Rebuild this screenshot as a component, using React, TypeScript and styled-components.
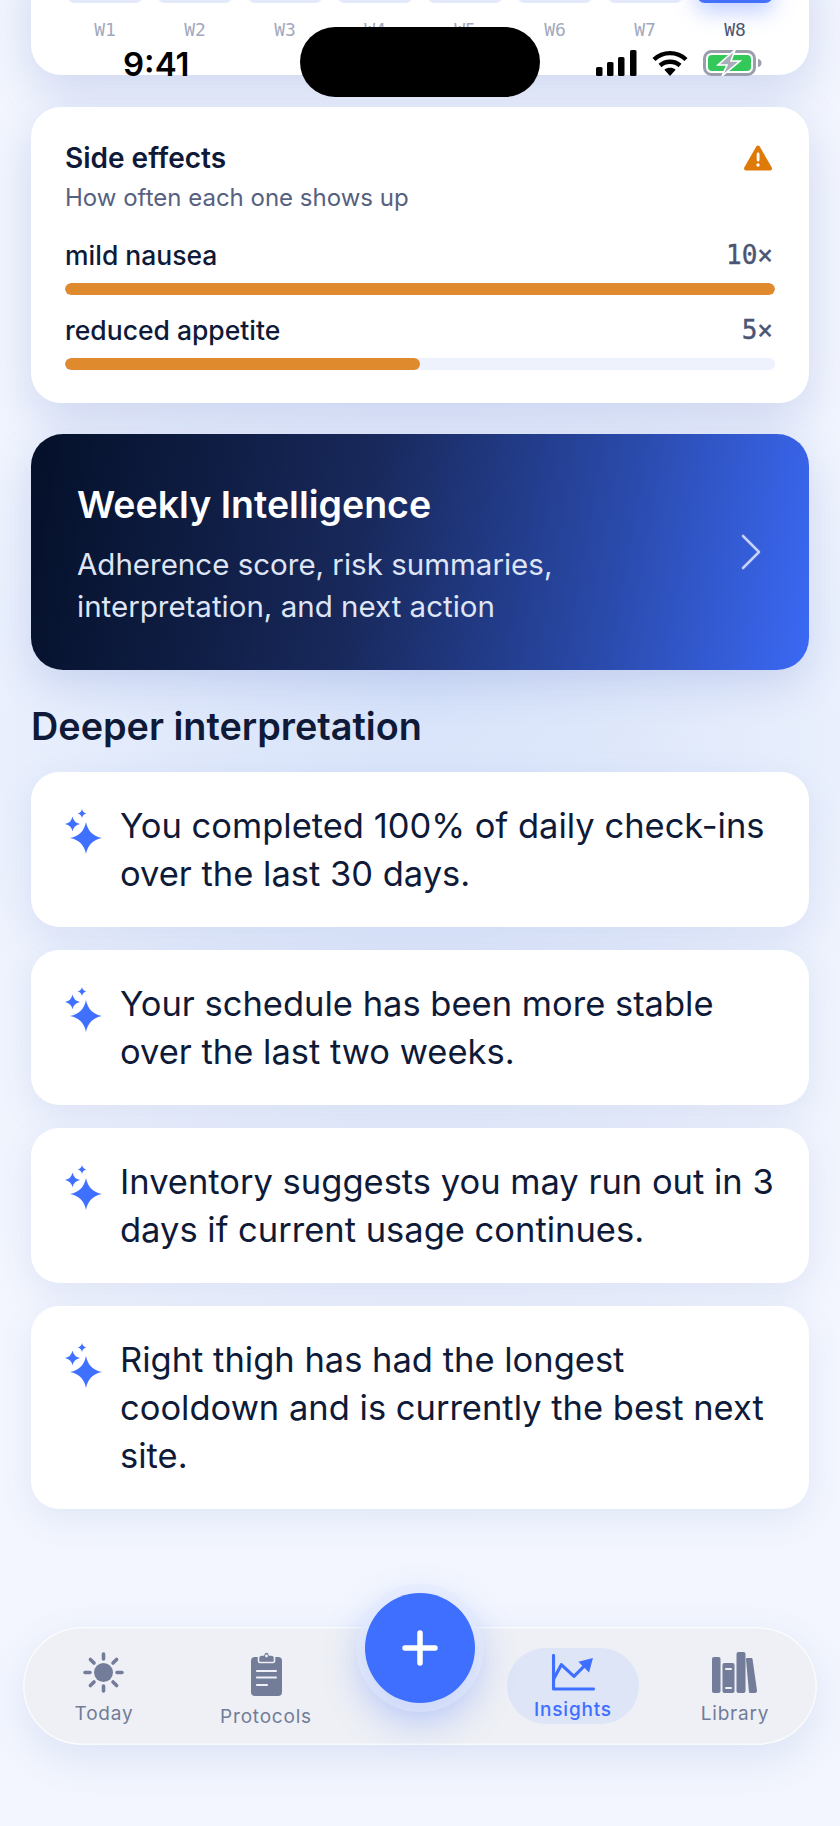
import React from 'react';
import styled, { createGlobalStyle } from 'styled-components';

const GlobalStyle = createGlobalStyle`
  html, body {
    margin: 0;
    padding: 0;
    background: #f3f6fe;
  }
  * {
    box-sizing: border-box;
  }
`;

const Page = styled.div`
  position: relative;
  width: 840px;
  height: 1826px;
  overflow: hidden;
  padding: 0 31px;
  font-family: Inter, 'Noto Sans', sans-serif;
  color: #0e1a38;
  background:
    radial-gradient(ellipse 620px 420px at 50% 690px, #d7e3fa 0%, rgba(215, 227, 250, 0) 100%),
    radial-gradient(ellipse 520px 520px at 50% 1000px, #e3eafa 0%, rgba(227, 234, 250, 0) 100%),
    #f3f6fe;
`;

const Card = styled.section`
  background: #fff;
  border-radius: 30px;
  box-shadow: 0 16px 48px rgba(64, 96, 190, 0.2);
`;

const ChartCard = styled(Card)`
  height: 135px;
  margin: -60px 0 32px;
  padding: 0 36px;
`;

const Bars = styled.div`
  display: grid;
  grid-template-columns: repeat(8, 76px);
  justify-content: space-between;
  height: 63px;
`;

const Bar = styled.div<{ $active?: boolean }>`
  border-radius: 0 0 8px 8px;
  background: ${(p) => (p.$active ? '#4570fb' : '#e4eafc')};
  box-shadow: ${(p) => (p.$active ? '0 8px 22px rgba(69, 112, 251, 0.35)' : 'none')};
`;

const WeekRow = styled(Bars)`
  height: auto;
  margin-top: 15px;
`;

const Week = styled.span<{ $active?: boolean }>`
  font-family: 'DejaVu Sans Mono', 'Liberation Mono', monospace;
  font-size: 18px;
  line-height: 24px;
  text-align: center;
  color: ${(p) => (p.$active ? '#4a5573' : '#a2a9bd')};
`;

const EffectsCard = styled(Card)`
  padding: 34px 34px 33px;
`;

const TitleRow = styled.div`
  display: flex;
  justify-content: space-between;
  align-items: center;
  padding-right: 3px;
`;

const CardTitle = styled.h3`
  margin: 0;
  font-size: 28px;
  font-weight: 600;
  line-height: 34px;
`;

const Subtitle = styled.p`
  margin: 8px 0 27px;
  font-size: 24px;
  line-height: 30px;
  color: #56617f;
`;

const EffectRow = styled.div`
  display: flex;
  justify-content: space-between;
  margin-top: 20px;
  padding-right: 2px;
  font-size: 26.5px;
  font-weight: 500;
  line-height: 30px;
  &:first-of-type {
    margin-top: 0;
  }
`;

const Count = styled.span`
  font-family: 'DejaVu Sans Mono', 'Liberation Mono', monospace;
  font-size: 26px;
  -webkit-text-stroke: 0.4px #4a5573;
  color: #4a5573;
`;

const Track = styled.div`
  height: 12px;
  margin-top: 13px;
  border-radius: 6px;
  background: #eef2fc;
  overflow: hidden;
`;

const Fill = styled.div`
  height: 100%;
  border-radius: 6px;
  background: #de8a2d;
`;

const WeeklyCard = styled.section`
  display: flex;
  justify-content: space-between;
  align-items: center;
  height: 236px;
  margin-top: 31px;
  padding: 0 48px 0 46px;
  border-radius: 32px;
  background: linear-gradient(100deg, #041029 0%, #18285a 42%, #2a4aab 74%, #3b69f5 100%);
  box-shadow: 0 14px 40px rgba(64, 96, 190, 0.18);
`;

const WeeklyCopy = styled.div`
  padding-top: 6px;
`;

const WeeklyTitle = styled.h2`
  margin: 0 0 16px;
  font-size: 37.5px;
  font-weight: 600;
  line-height: 44px;
  color: #fff;
`;

const WeeklyText = styled.p`
  margin: 0;
  width: 520px;
  font-size: 29.5px;
  line-height: 42px;
  color: #dfe5f5;
`;

const Heading = styled.h2`
  margin: 33px 0 23px;
  font-size: 37.8px;
  font-weight: 600;
  line-height: 46px;
`;

const InsightList = styled.div`
  display: flex;
  flex-direction: column;
  gap: 23px;
`;

const InsightCard = styled(Card)`
  display: flex;
  gap: 18px;
  padding: 30px 24px 29px 34px;
  border-radius: 28px;
  box-shadow: 0 10px 34px rgba(64, 96, 190, 0.1);
`;

const InsightText = styled.p`
  margin: 0;
  flex: 1;
  font-size: 34.5px;
  line-height: 48px;
`;

const Sparkle = styled.svg`
  flex: none;
  margin-top: 7px;
`;

const StatusBar = styled.div`
  position: absolute;
  top: 48px;
  left: 123px;
  right: 78px;
  display: flex;
  justify-content: space-between;
  align-items: center;
`;

const Time = styled.span`
  padding-top: 2px;
  font-size: 33px;
  font-weight: 600;
  line-height: 28px;
  color: #000;
`;

const StatusIcons = styled.div`
  display: flex;
  align-items: center;
  gap: 15px;
`;

const Island = styled.div`
  position: absolute;
  top: 27px;
  left: 300px;
  width: 240px;
  height: 70px;
  border-radius: 35px;
  background: #000;
`;

const TabBar = styled.nav`
  position: absolute;
  left: 23px;
  top: 1627px;
  width: 794px;
  height: 118px;
  display: grid;
  grid-template-columns: 162px 162px 146px 160px 164px;
  border-radius: 59px;
  background: #eef0f5;
  box-shadow:
    inset 0 0 0 1.5px rgba(255, 255, 255, 0.7),
    0 14px 40px rgba(64, 96, 190, 0.12);
`;

const Tab = styled.div<{ $top: number; $active?: boolean }>`
  display: flex;
  flex-direction: column;
  align-items: center;
  gap: ${(p) => (p.$active ? 7 : 9)}px;
  justify-self: center;
  align-self: start;
  margin-top: ${(p) => p.$top}px;
  padding: ${(p) => (p.$active ? '6px 0 2px' : '0')};
  width: ${(p) => (p.$active ? '132px' : 'auto')};
  height: ${(p) => (p.$active ? '76px' : 'auto')};
  border-radius: 38px;
  background: ${(p) => (p.$active ? '#dde5f7' : 'transparent')};
`;

const TabLabel = styled.span<{ $active?: boolean }>`
  font-size: 19px;
  font-weight: ${(p) => (p.$active ? 500 : 400)};
  line-height: 24px;
  letter-spacing: 0.8px;
  color: ${(p) => (p.$active ? '#3f6fff' : '#727c98')};
`;

const Fab = styled.button`
  position: absolute;
  left: 365px;
  top: 1593px;
  width: 110px;
  height: 110px;
  display: flex;
  align-items: center;
  justify-content: center;
  padding: 0;
  border: none;
  border-radius: 50%;
  background: #3f6fff;
  box-shadow:
    0 0 0 9px rgba(226, 234, 253, 0.5),
    0 14px 40px rgba(63, 111, 255, 0.4);
`;

const weeks = ['W1', 'W2', 'W3', 'W4', 'W5', 'W6', 'W7', 'W8'];

const effects = [
  { name: 'mild nausea', count: '10×', pct: 100 },
  { name: 'reduced appetite', count: '5×', pct: 50 },
];

const insights = [
  'You completed 100% of daily check-ins over the last 30 days.',
  'Your schedule has been more stable over the last two weeks.',
  'Inventory suggests you may run out in 3 days if current usage continues.',
  'Right thigh has had the longest cooldown and is currently the best next site.',
];

const star = (x: number, y: number, r: number) => {
  const k = r * 0.16;
  return `M${x} ${y - r}Q${x + k} ${y - k} ${x + r} ${y}Q${x + k} ${y + k} ${x} ${y + r}Q${x - k} ${y + k} ${x - r} ${y}Q${x - k} ${y - k} ${x} ${y - r}Z`;
};

const SparkleIcon = () => (
  <Sparkle width="37" height="45" viewBox="0 0 37 45">
    <path d={star(21, 29, 16)} fill="#4070ff" />
    <path d={star(7.5, 15, 7.5)} fill="#4070ff" />
    <path d={star(17, 4.5, 4.5)} fill="#4070ff" />
  </Sparkle>
);

const Signal = () => (
  <svg width="41" height="26" viewBox="0 0 41 26">
    <rect x="0" y="17" width="6.5" height="9" rx="1.5" />
    <rect x="11" y="12" width="6.5" height="14" rx="1.5" />
    <rect x="22" y="7" width="6.5" height="19" rx="1.5" />
    <rect x="34" y="0" width="6.5" height="26" rx="1.5" />
  </svg>
);

const Wifi = () => (
  <svg width="36" height="26" viewBox="0 0 36 26" fill="none" stroke="#000" strokeWidth="4.4">
    <path d="M2 9.5C11 1 25 1 34 9.5" />
    <path d="M8 15.5C13.5 10.5 22.5 10.5 28 15.5" />
    <path d="M18 26l-5.6-6.2c3.2-2.6 8-2.6 11.2 0z" fill="#000" stroke="none" />
  </svg>
);

const Battery = () => (
  <svg width="59" height="26" viewBox="0 0 59 26">
    <rect x="1.5" y="1.5" width="50" height="23" rx="7" fill="none" stroke="#9a9fab" strokeWidth="3" />
    <rect x="5" y="5" width="43" height="16" rx="4" fill="#34c759" />
    <path d="M55 9c2.5.6 3.5 2 3.5 4s-1 3.4-3.5 4z" fill="#9a9fab" />
    <path d="M32 0L15 15h9l-5 11 18-15h-9z" fill="#a9adb8" stroke="#fff" strokeWidth="1.6" />
  </svg>
);

const WarningIcon = () => (
  <svg width="28" height="26" viewBox="0 0 28 26">
    <path d="M14 2.5L26 23.5H2z" fill="#de7a08" stroke="#de7a08" strokeWidth="4" strokeLinejoin="round" />
    <rect x="12.7" y="7.5" width="2.8" height="9" rx="1.4" fill="#fff" />
    <circle cx="14" cy="20" r="1.7" fill="#fff" />
  </svg>
);

const Chevron = () => (
  <svg width="20" height="36" viewBox="0 0 20 36" fill="none" stroke="#c5d1f5" strokeWidth="2.6" strokeLinecap="round" strokeLinejoin="round">
    <path d="M2 2l16 16L2 34" />
  </svg>
);

const SunIcon = () => (
  <svg width="41" height="41" viewBox="0 0 41 41" stroke="#737d99" strokeWidth="3.6" strokeLinecap="round">
    <circle cx="20.5" cy="20.5" r="9.5" fill="#737d99" stroke="none" />
    <path d="M20.5 2v5M20.5 34v5M2 20.5h5M34 20.5h5M7.4 7.4l3.6 3.6M30 30l3.6 3.6M33.6 7.4L30 11M11 30l-3.6 3.6" />
  </svg>
);

const ClipboardIcon = () => (
  <svg width="33" height="45" viewBox="0 0 33 45">
    <rect x="1" y="6" width="31" height="39" rx="4" fill="#737d99" />
    <path d="M8.5 6.5C8.5 4.5 10 4 12 4h1.5c.5-2 1.5-3 3-3s2.5 1 3 3H21c2 0 3.5.5 3.5 2.5V10c0 1-.5 1.5-1.5 1.5H10c-1 0-1.5-.5-1.5-1.5z" fill="#737d99" stroke="#eef0f5" strokeWidth="1.6" />
    <circle cx="16.5" cy="5" r="1.4" fill="#eef0f5" />
    <path d="M7 20h19M7 26.5h19M7 34h10" stroke="#eef0f5" strokeWidth="2.2" strokeLinecap="round" />
  </svg>
);

const ChartIcon = () => (
  <svg width="44" height="38" viewBox="0 0 44 38" fill="none" stroke="#3f6fff" strokeWidth="3.2" strokeLinecap="round" strokeLinejoin="round">
    <path d="M2 1.5V36h41" />
    <path d="M2 26L10 11l13 12L34 12" />
    <path d="M42.5 4L27.5 8l11 11z" fill="#3f6fff" stroke="none" />
  </svg>
);

const BooksIcon = () => (
  <svg width="46" height="41" viewBox="0 0 46 41" fill="#737d99">
    <rect x="0" y="5" width="8.5" height="36" rx="2" />
    <rect x="10.5" y="11" width="12" height="30" rx="2" />
    <rect x="24.5" y="0" width="9" height="41" rx="2" />
    <path d="M35 6h4c1 0 1.5.5 1.6 1.5L45 38.5c.1 1.5-.5 2.500-2 2.500h-4.500c-1 0-1.500-.5-1.600-1.500L34 7.500C34 6.500 34.300 6 35 6z" />
    <path d="M14 17h5M14 36h5" stroke="#eef0f5" strokeWidth="2" strokeLinecap="round" />
  </svg>
);

const App: React.FC = () => (
  <>
    <GlobalStyle />
    <Page>
      <ChartCard>
        <Bars>
          {weeks.map((w, i) => (
            <Bar key={w} $active={i === 7} />
          ))}
        </Bars>
        <WeekRow>
          {weeks.map((w, i) => (
            <Week key={w} $active={i === 7}>
              {w}
            </Week>
          ))}
        </WeekRow>
      </ChartCard>

      <EffectsCard>
        <TitleRow>
          <CardTitle>Side effects</CardTitle>
          <WarningIcon />
        </TitleRow>
        <Subtitle>How often each one shows up</Subtitle>
        {effects.map((e) => (
          <React.Fragment key={e.name}>
            <EffectRow>
              <span>{e.name}</span>
              <Count>{e.count}</Count>
            </EffectRow>
            <Track>
              <Fill style={{ width: `${e.pct}%` }} />
            </Track>
          </React.Fragment>
        ))}
      </EffectsCard>

      <WeeklyCard>
        <WeeklyCopy>
          <WeeklyTitle>Weekly Intelligence</WeeklyTitle>
          <WeeklyText>Adherence score, risk summaries, interpretation, and next action</WeeklyText>
        </WeeklyCopy>
        <Chevron />
      </WeeklyCard>

      <Heading>Deeper interpretation</Heading>
      <InsightList>
        {insights.map((text) => (
          <InsightCard key={text}>
            <SparkleIcon />
            <InsightText>{text}</InsightText>
          </InsightCard>
        ))}
      </InsightList>

      <StatusBar>
        <Time>9:41</Time>
        <StatusIcons>
          <Signal />
          <Wifi />
          <Battery />
        </StatusIcons>
      </StatusBar>
      <Island />

      <TabBar>
        <Tab $top={25}>
          <SunIcon />
          <TabLabel>Today</TabLabel>
        </Tab>
        <Tab $top={24}>
          <ClipboardIcon />
          <TabLabel>Protocols</TabLabel>
        </Tab>
        <span />
        <Tab $top={21} $active>
          <ChartIcon />
          <TabLabel $active>Insights</TabLabel>
        </Tab>
        <Tab $top={25}>
          <BooksIcon />
          <TabLabel>Library</TabLabel>
        </Tab>
      </TabBar>
      <Fab aria-label="Add">
        <svg width="38" height="38" viewBox="0 0 38 38" stroke="#fff" strokeWidth="5.5" strokeLinecap="round">
          <path d="M4 19h30M19 4v30" />
        </svg>
      </Fab>
    </Page>
  </>
);

export default App;
